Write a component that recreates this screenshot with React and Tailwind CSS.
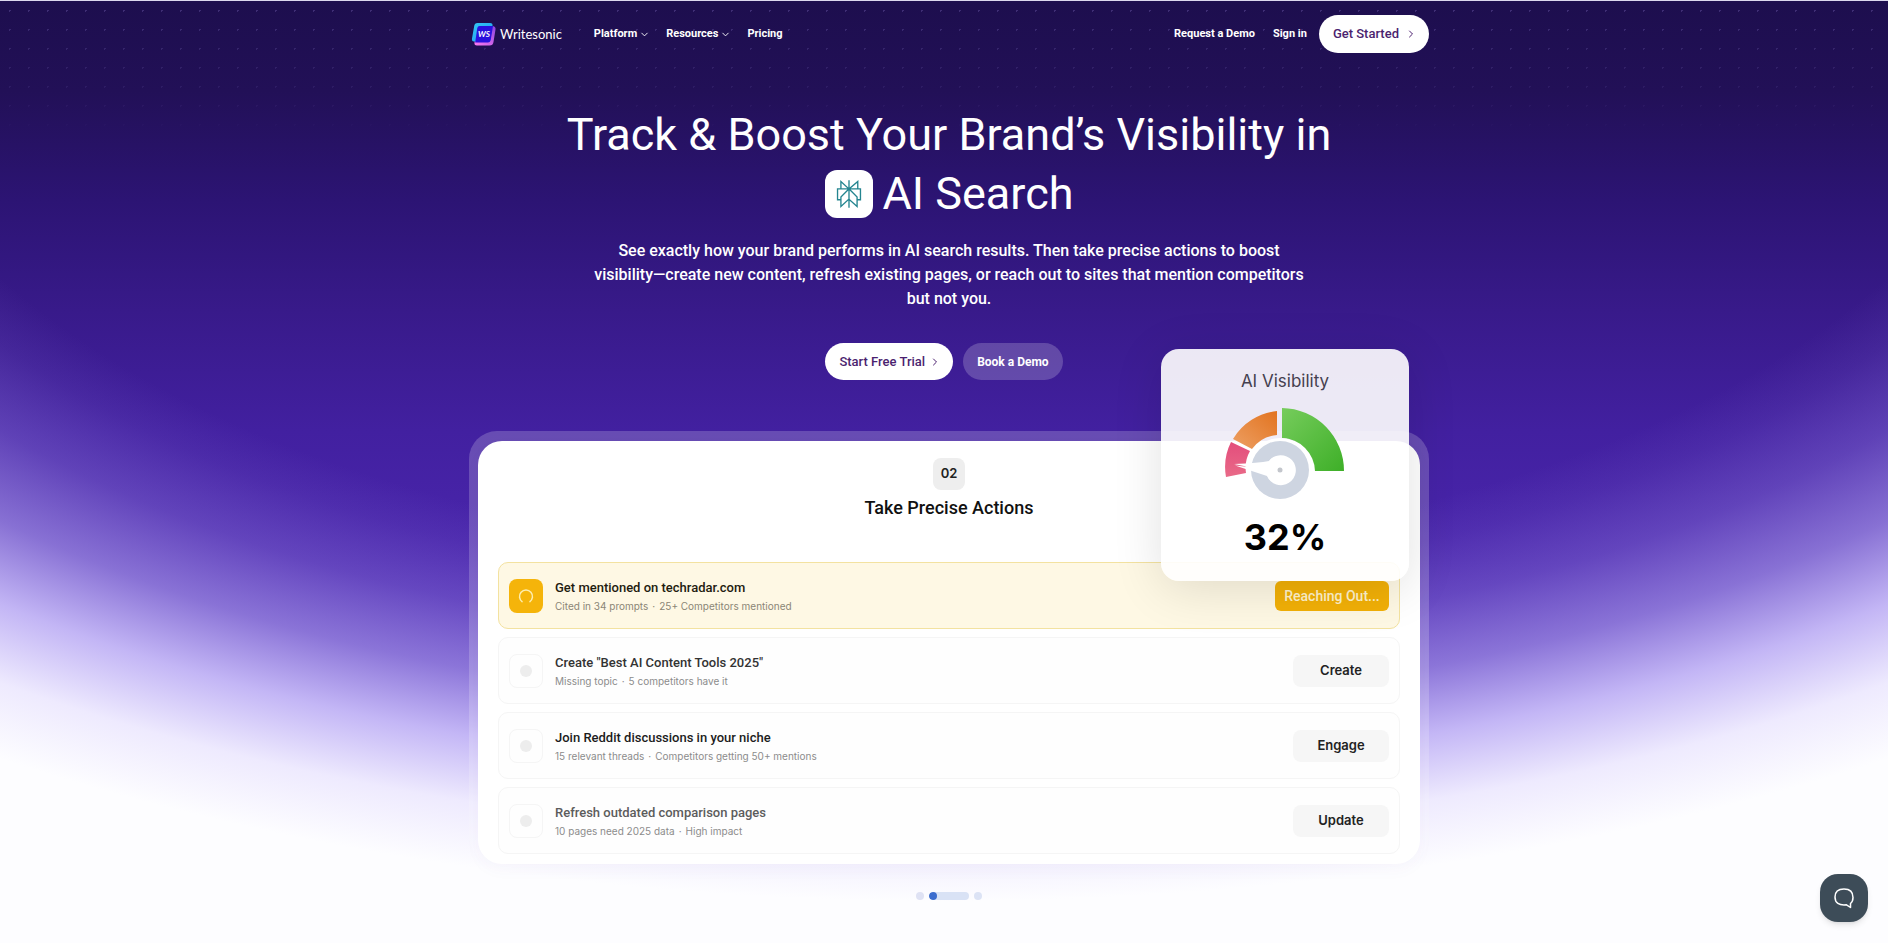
import React from 'react';
import { ChevronDown, ChevronRight } from 'lucide-react';
import { SiPerplexity } from 'react-icons/si';

const tasks = [
  {
    title: 'Get mentioned on techradar.com',
    details: ['Cited in 34 prompts', '25+ Competitors mentioned'],
    action: 'Reaching Out...',
    active: true,
    titleClass: 'text-[#1f1c10]',
  },
  {
    title: 'Create "Best AI Content Tools 2025"',
    details: ['Missing topic', '5 competitors have it'],
    action: 'Create',
    titleClass: 'text-[#333333]',
  },
  {
    title: 'Join Reddit discussions in your niche',
    details: ['15 relevant threads', 'Competitors getting 50+ mentions'],
    action: 'Engage',
    titleClass: 'text-[#1c1c1c]',
  },
  {
    title: 'Refresh outdated comparison pages',
    details: ['10 pages need 2025 data', 'High impact'],
    action: 'Update',
    titleClass: 'text-[#5c5c5c]',
  },
];

function Logo() {
  return (
    <a href="#" className="flex items-center gap-1 pl-0.5 text-white">
      <svg width="25" height="24" viewBox="0 0 25 24" aria-hidden="true">
        <defs>
          <linearGradient id="logo-cyan" x1="0" y1="0" x2="1" y2="1">
            <stop offset="0" stopColor="#35c8f5" />
            <stop offset="1" stopColor="#1b9af0" />
          </linearGradient>
          <linearGradient id="logo-pink" x1="1" y1="0" x2="0" y2="1">
            <stop offset="0" stopColor="#8b45e0" />
            <stop offset="1" stopColor="#ff7bf0" />
          </linearGradient>
        </defs>
        <path d="M7 4h14q4 0 3.500 3.500l-2 12.500q-.5 3.500-4 3.500H6q-3 0-2.500-3z" fill="url(#logo-pink)" />
        <path d="M6.500 1H19q3 0 2.500 3L19 19.500H3q-2.500 0-2-3L3.200 4Q3.600 1 6.500 1z" fill="url(#logo-cyan)" />
        <path d="M8.500 4H22l-2.200 13.500q-.5 3-3 3H4.200L6.300 6q.4-2 2.200-2z" fill="#2a10dc" />
        <text x="13" y="15" textAnchor="middle" fontSize="8" fontWeight="700" fontStyle="italic" fontFamily="Lato, sans-serif" fill="#fff">
          WS
        </text>
      </svg>
      <span className="font-[Lato,sans-serif] text-[13px] leading-5">Writesonic</span>
    </a>
  );
}

function Gauge() {
  return (
    <svg width="122" height="94" viewBox="0 0 122 94" aria-hidden="true">
      <defs>
        <linearGradient id="gauge-green" x1="0" y1="0" x2="1" y2="1">
          <stop offset="0" stopColor="#76cc5c" />
          <stop offset="1" stopColor="#3eaf28" />
        </linearGradient>
        <linearGradient id="gauge-orange" x1="0" y1="1" x2="1" y2="0">
          <stop offset="0" stopColor="#eda064" />
          <stop offset="1" stopColor="#e2731f" />
        </linearGradient>
        <linearGradient id="gauge-red" x1="0" y1="0" x2="0" y2="1">
          <stop offset="0" stopColor="#e34d7c" />
          <stop offset="1" stopColor="#e96a88" />
        </linearGradient>
      </defs>
      <path d="M58 1A63 63 0 0 1 120 64H91A34 34 0 0 0 58 31Z" fill="url(#gauge-green)" />
      <path d="M53 4V28A34 34 0 0 0 28 42L9 32A58 58 0 0 1 53 4Z" fill="url(#gauge-orange)" />
      <path d="M7 35L26 44A34 34 0 0 0 22 66L2 70A56 56 0 0 1 7 35Z" fill="url(#gauge-red)" />
      <circle cx="56" cy="63" r="32" fill="#fff" />
      <circle cx="56" cy="63" r="29" fill="#ced5e1" />
      <path d="M10 57L25 60L11 58.500L43 69A15 15 0 1 0 45 54Q35 56 10 57Z" fill="#fff" />
      <circle cx="56" cy="63" r="14" fill="#fff" />
      <circle cx="56" cy="63" r="2.500" fill="#c3c6cc" />
    </svg>
  );
}

function Backdrop() {
  return (
    <div
      aria-hidden="true"
      className="absolute inset-0 -z-10 bg-[linear-gradient(180deg,#1d0e4e_0px,#221057_90px,#2c1474_200px,#381a8a_310px,#4220a0_430px,#4a26ad_560px,#5a38c0_700px)]"
    >
      <div className="absolute inset-x-0 top-0 h-64 bg-[radial-gradient(circle,#8f7ccf50_1px,transparent_1px)] bg-size-[19px_19px] mask-[linear-gradient(180deg,#000_0px,#0006_80px,transparent_140px)]" />
      <div className="absolute inset-0 bg-[radial-gradient(1750px_900px_at_50%_0px,transparent_62%,#8a74d81f_66%,#8a74d866_72%,#a08ee4b8_79%,#cabef9f0_86%,#eeeafe_93%,#fdfdff_100%)]" />
    </div>
  );
}

function VisibilityCard() {
  return (
    <div className="absolute right-5 -top-20.5 w-62 rounded-[18px] bg-white/90 shadow-[0_8px_50px_rgba(0,0,0,0.12)] flex flex-col items-center pt-[18px] pb-5">
      <p className="font-[Inter,sans-serif] text-[17px] leading-7 text-[#45404f]">AI Visibility</p>
      <div className="mt-3">
        <Gauge />
      </div>
      <p className="mt-3 font-[Inter,sans-serif] text-4xl leading-12 font-bold text-black">32%</p>
    </div>
  );
}

function TaskRow({ task }) {
  return (
    <li
      className={`flex items-center h-[67px] pl-2.5 pr-2.5 rounded-[10px] border ${task.active ? 'bg-[#fef8e4] border-[#f3e2a0]' : 'bg-[#fefefe] border-[#f5f5f5]'}`}
    >
      {task.active ? (
        <span className="w-[34px] h-[34px] rounded-lg bg-[#f5b40a] flex items-center justify-center">
          <svg width="16" height="16" viewBox="0 0 16 16" fill="none" stroke="#fdeeb0" strokeWidth="1.500" aria-hidden="true">
            <path d="M4.500 14A6.500 6.500 0 1 1 11.500 14" />
          </svg>
        </span>
      ) : (
        <span className="w-[34px] h-[34px] rounded-lg border border-[#f5f5f5] flex items-center justify-center">
          <span className="w-3 h-3 rounded-full bg-[#ededed]" />
        </span>
      )}
      <div className="ml-3 flex-1 min-w-0">
        <h3 className={`text-[13px] leading-5 font-medium ${task.titleClass}`}>{task.title}</h3>
        <p className={`font-[Inter,sans-serif] text-[10px] leading-4 flex gap-1 ${task.active ? 'text-[#8b8676]' : 'text-[#8c8c8c]'}`}>
          <span>{task.details[0]}</span>
          <span>·</span>
          <span>{task.details[1]}</span>
        </p>
      </div>
      <button
        type="button"
        className={task.active
          ? 'h-[30px] w-[114px] rounded-md bg-[#f2b007] text-sm font-medium text-[#fff3cc]'
          : 'h-8 w-24 rounded-lg bg-[#f6f6f6] font-[Inter,sans-serif] text-[13px] font-semibold text-[#222222]'}
      >
        {task.action}
      </button>
    </li>
  );
}

export default function App() {
  return (
    <div className="relative isolate min-h-screen overflow-hidden border-t border-[#dcd8ee] pl-2.5 font-[Roboto,Inter,sans-serif]">
      <Backdrop />

      <div className="mx-auto w-full max-w-[960px]">
        <header className="flex items-center justify-between pt-3.5">
          <div className="flex items-center">
            <Logo />
            <nav className="ml-8 flex items-center gap-4 text-[11px] leading-5 font-bold text-white">
              <a href="#" className="flex items-center gap-0.5">
                Platform <ChevronDown size={11} />
              </a>
              <a href="#" className="flex items-center gap-0.5">
                Resources <ChevronDown size={11} />
              </a>
              <a href="#">Pricing</a>
            </nav>
          </div>
          <div className="flex items-center text-[11px] leading-5 font-bold text-white">
            <a href="#">Request a Demo</a>
            <a href="#" className="ml-[18px]">Sign in</a>
            <a href="#" className="ml-3 h-[38px] pl-3.5 pr-3 rounded-full bg-white text-[13px] font-medium text-[#4b1f6f] flex items-center gap-1.5">
              Get Started <ChevronRight size={12} />
            </a>
          </div>
        </header>

        <main>
          {/* Hero copy */}
          <section className="flex flex-col items-center text-center text-white">
            <h1 className="mt-13 text-[45px] leading-[59px] font-normal">
              Track &amp; Boost Your Brand’s Visibility in
              <span className="flex items-center justify-center gap-2.5">
                <span className="w-12 h-12 rounded-xl bg-white flex items-center justify-center">
                  <SiPerplexity size={28} color="#258590" />
                </span>
                AI Search
              </span>
            </h1>
            <p className="mt-4 max-w-[710px] text-base leading-6 font-medium">
              See exactly how your brand performs in AI search results. Then take precise actions to boost
              visibility—create new content, refresh existing pages, or reach out to sites that mention competitors
              but not you.
            </p>
            <div className="mt-8 mr-2.5 flex gap-2.5">
              <a href="#" className="h-[37px] pl-3.5 pr-3 rounded-full bg-white text-[13px] font-medium text-[#4b1f6f] flex items-center gap-1">
                Start Free Trial <ChevronRight size={12} />
              </a>
              <a href="#" className="h-[37px] px-3.5 rounded-full bg-white/20 text-xs font-bold flex items-center">
                Book a Demo
              </a>
            </div>
          </section>

          {/* Product preview */}
          <section className="relative mt-[51px]">
            <div className="rounded-[28px] bg-white/20 px-[9px] pt-2.5">
              <div className="rounded-3xl bg-white px-5 pt-[17px] pb-2.5 flex flex-col items-center shadow-[0_6px_16px_rgba(80,60,160,0.03)]">
                <span className="w-8 h-8 rounded-lg bg-[#eeeeee] font-[Inter,sans-serif] text-[13px] font-semibold text-[#222222] flex items-center justify-center">
                  02
                </span>
                <h2 className="mt-1 text-lg leading-7 font-medium text-[#111111]">Take Precise Actions</h2>
                <ul className="mt-10 w-full flex flex-col gap-2">
                  {tasks.map((task) => (
                    <TaskRow key={task.title} task={task} />
                  ))}
                </ul>
              </div>
            </div>
            <VisibilityCard />
          </section>

          <div className="mt-7 flex justify-center gap-[5px]">
            <button type="button" aria-label="Step 1" className="w-2 h-2 rounded-full bg-[#dfe2f4]" />
            <button type="button" aria-label="Step 2" className="w-10 h-2 rounded-full bg-[#d9e2f5] overflow-hidden">
              <span className="block w-2 h-2 rounded-full bg-[#3b6cce]" />
            </button>
            <button type="button" aria-label="Step 3" className="w-2 h-2 rounded-full bg-[#dce3f5]" />
          </div>
        </main>
      </div>

      <button
        type="button"
        aria-label="Open chat"
        className="fixed right-5 bottom-[21px] w-12 h-12 rounded-[18px] bg-[#3d4c58] shadow-md flex items-center justify-center"
      >
        <svg width="24" height="24" viewBox="0 0 24 24" fill="none" stroke="#fff" strokeWidth="1.500" strokeLinejoin="round" aria-hidden="true">
          <path d="M12 3Q21 3 21 11.500Q21 15.500 18.500 17.500V21.500L14.500 18.800Q3 20 3 11Q3 3 12 3Z" />
        </svg>
      </button>
    </div>
  );
}
